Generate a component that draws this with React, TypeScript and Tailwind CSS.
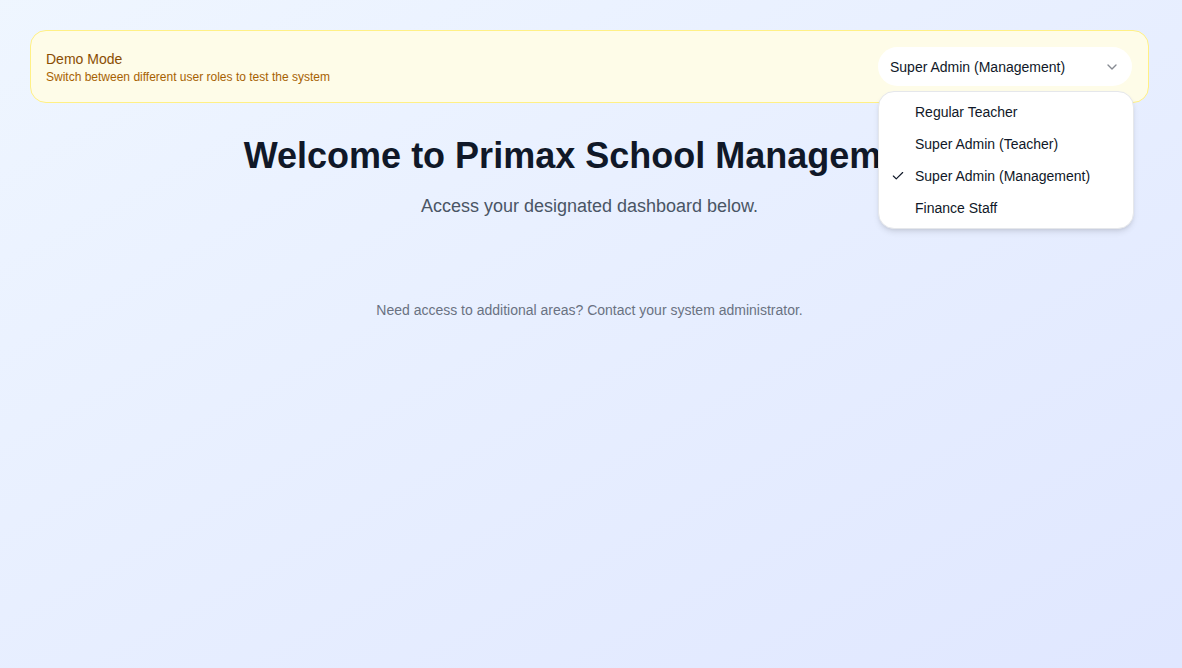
import { Check, ChevronDown } from "lucide-react";

const roles = [
  "Regular Teacher",
  "Super Admin (Teacher)",
  "Super Admin (Management)",
  "Finance Staff",
];

export default function App() {
  const current = "Super Admin (Management)";
  return (
    <div className="min-h-[668px] bg-gradient-to-br from-blue-50 to-indigo-100 pt-[30px] pl-[30px] pr-[33px] font-['Liberation_Sans',Arial,sans-serif]">
      <div className="flex items-center justify-between rounded-2xl border border-yellow-200 bg-yellow-50 py-4 pl-[15px] pr-4">
        <div className="flex flex-col">
          <span className="text-sm leading-5 text-yellow-800">Demo Mode</span>
          <span className="text-xs leading-4 text-yellow-700">
            Switch between different user roles to test the system
          </span>
        </div>
        <div className="relative">
          <button className="flex h-[39px] w-[254px] items-center justify-between rounded-full bg-white pl-3 pr-3 text-sm text-gray-900">
            <span>{current}</span>
            <ChevronDown className="h-4 w-4 opacity-50" />
          </button>
          {/* open role menu */}
          <div className="absolute left-0 top-[44px] z-10 w-[256px] rounded-2xl border border-gray-200 bg-white p-1 shadow-md">
            {roles.map((r) => (
              <div
                key={r}
                className="relative flex items-center py-1.5 pl-8 pr-2 text-sm leading-5 text-gray-900"
              >
                {r === current && (
                  <Check className="absolute left-2 h-3.5 w-3.5" strokeWidth={2} />
                )}
                {r}
              </div>
            ))}
          </div>
        </div>
      </div>

      <div className="flex flex-col items-center">
        <h1 className="mt-[33px] text-4xl font-bold text-gray-900">
          Welcome to Primax School Management
        </h1>
        <p className="mt-4 text-lg text-gray-600">
          Access your designated dashboard below.
        </p>
        <p className="mt-20 text-sm text-gray-500">
          Need access to additional areas? Contact your system administrator.
        </p>
      </div>
    </div>
  );
}
